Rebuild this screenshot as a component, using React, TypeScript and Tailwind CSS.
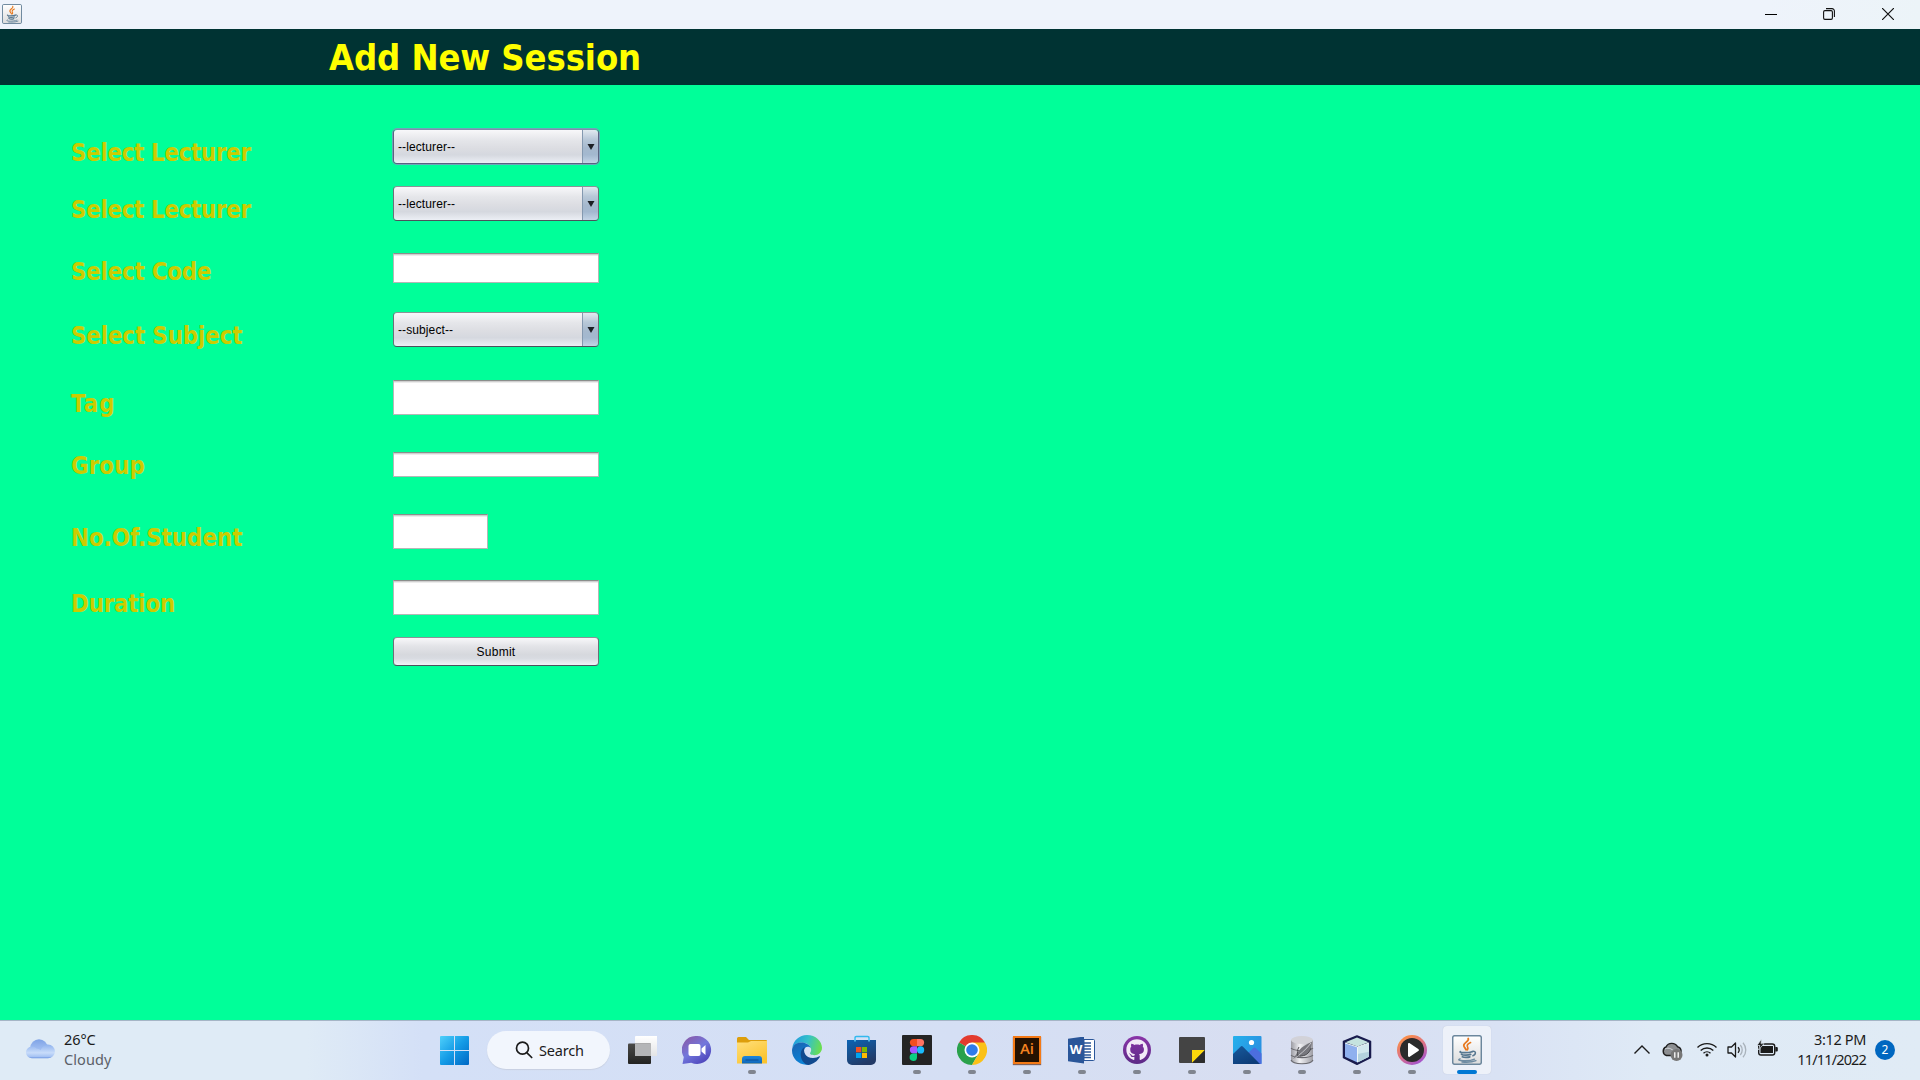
import type { ReactNode } from "react";
import { FaGithub } from "react-icons/fa";

const labelFont = "font-['DejaVu_Sans_Condensed','DejaVu_Sans',sans-serif] [font-stretch:condensed]";

function JavaCup({ className }: { className: string }) {
  return (
    <svg viewBox="0 0 30 30" className={className}>
      <defs>
        <linearGradient id="javaTile" x1="0" y1="0" x2="0" y2="1">
          <stop offset="0" stopColor="#ffffff" />
          <stop offset="1" stopColor="#dcdcdc" />
        </linearGradient>
      </defs>
      <rect x="0.7" y="0.7" width="28.6" height="28.6" rx="2" fill="url(#javaTile)" stroke="#6c879d" strokeWidth="1.5" />
      <g fill="none" strokeLinecap="round">
        <path d="M16.2 3.5c1.5 2.6-4.7 4.3-4.4 7 .1 1.700 1.700 2.700 2.400 4.300" stroke="#e7791f" strokeWidth="1.8" />
        <path d="M18.600 7.500c-2 1-3.900 2.200-3.300 3.800.5 1.200 1.300 2 .2 3.500" stroke="#e7791f" strokeWidth="1.600" />
        <path d="M8.500 16.600c-2.500 1.300 8.500 1.500 11.500.1M9.500 19.300c1 1 7 1 9.200.1M10.300 21.800c1.600.9 5.700.8 7.500.1" stroke="#57778f" strokeWidth="1.700" />
        <path d="M20.300 16.500c4.300-1 3.800 3.200.6 4.200" stroke="#57778f" strokeWidth="1.500" />
        <path d="M8 23.800c-5.500 2 9 3 14.500.4M10 27c4 .4 10 .3 14-1.300" stroke="#6f8ca2" strokeWidth="1.400" />
      </g>
    </svg>
  );
}

function ComboBox({ text, focused = false }: { text: string; focused?: boolean }) {
  return (
    <div
      className={
        "flex h-[35px] w-[206px] shrink-0 overflow-hidden rounded-[4px] border " +
        (focused
          ? "border-[#5b6280] border-t-[#7d8cab] shadow-[0_0_0_1px_#6fa5b9]"
          : "border-[#6b7078] border-t-[#8d9298] border-b-[#4c525c]")
      }
    >
      <div className="flex flex-1 items-center bg-[linear-gradient(to_bottom,#f8f8fa_0%,#e5e6ea_30%,#dcdde2_55%,#d5d8df_75%,#eceff5_100%)] pl-1 font-['Liberation_Sans',Arial,sans-serif] text-[12px] tracking-[0.1px] text-black">
        {text}
      </div>
      <div className="flex w-[16px] items-center justify-center border-l border-[#8499b0] bg-[linear-gradient(to_bottom,#e2e9f0_0%,#b8c8d8_28%,#a5b8cd_55%,#a3b8cf_75%,#c3d4e6_100%)]">
        <svg viewBox="0 0 8 6" className="h-1.5 w-2">
          <path d="M0.500 0h7L4 6z" fill="#1c1f24" />
        </svg>
      </div>
    </div>
  );
}

function TextField({ className }: { className: string }) {
  return (
    <div
      className={
        "shrink-0 border border-[#b4b8b6] border-t-[#8a8e8c] bg-white shadow-[inset_0_1px_0_#cfcfcf,inset_0_2px_0_#ececec] " + className
      }
    />
  );
}

function Row({ label, tracking, className, children }: { label: string; tracking: string; className: string; children: ReactNode }) {
  return (
    <div className={"flex items-end " + className}>
      <label className={labelFont + " w-[322px] shrink-0 translate-y-[4px] text-[24px] leading-[30px] font-bold whitespace-nowrap text-[#cccc00] " + tracking}>
        {label}
      </label>
      {children}
    </div>
  );
}

function TaskIcon({ children, running = false, active = false }: { children: ReactNode; running?: boolean; active?: boolean }) {
  return (
    <div className="flex h-[59px] w-[55px] shrink-0 items-center pb-px pl-[3px]">
      <div className={"flex h-12 w-12 flex-col items-center rounded-[4px] pt-[9px] " + (active ? "bg-[#edf1f9] shadow-[0_0_1px_#b9bfd0]" : "")}>
        {children}
        {running && <div className={"mt-[5px] h-1 shrink-0 rounded-full " + (active ? "w-5 bg-[#0078d4]" : "w-2 bg-[#80858f]")} />}
      </div>
    </div>
  );
}

const ic = "h-[30px] w-[30px] shrink-0";

function Taskbar() {
  return (
    <footer className="flex h-[60px] shrink-0 border-t border-[#a5b5c6] bg-[linear-gradient(to_right,#dfebf6_0%,#dfebf6_16%,#d4e0f7_22%,#d5dff4_50%,#d8def1_66%,#d9e2f4_78%,#dfeaf6_86%,#e0ebf5_100%)] font-['Noto_Sans',sans-serif] text-[14.5px] text-[#1b1b1b]">
      <div className="flex w-[427px] shrink-0 pl-[25px]">
        <svg viewBox="0 0 30 20" className="mt-[18px] h-5 w-[30px]">
          <defs>
            <linearGradient id="cloudBack" x1="0" y1="0" x2="0" y2="1">
              <stop offset="0" stopColor="#7fa3e6" />
              <stop offset="1" stopColor="#b9d2fa" />
            </linearGradient>
            <linearGradient id="cloudFront" x1="0" y1="0" x2="0" y2="1">
              <stop offset="0" stopColor="#8fb2ee" />
              <stop offset="0.6" stopColor="#c8dcfa" />
              <stop offset="0.88" stopColor="#a5c2f3" />
              <stop offset="1" stopColor="#6590df" />
            </linearGradient>
          </defs>
          <circle cx="14" cy="9" r="8.700" fill="url(#cloudBack)" />
          <path d="M7 19.300a6 5.900 0 1 1 4.500-9.800c1 0 3 .7 4.200 1.800C17 8 19.500 5.500 23 5.500a6.900 6.900 0 0 1 0 13.800z" fill="url(#cloudFront)" />
        </svg>
        <div className="ml-[9px] pt-[8px] leading-5">
          <div className="tracking-[-0.1px]">26°C</div>
          <div className="tracking-[0.1px] text-[#5b6068]">Cloudy</div>
        </div>
      </div>

      <div className="flex w-[54px] items-center justify-center">
        <svg viewBox="0 0 29 29" className="mb-px h-[29px] w-[29px]">
          <defs>
            <linearGradient id="winLogo" x1="0" y1="0" x2="1" y2="1" gradientUnits="objectBoundingBox">
              <stop offset="0" stopColor="#4fd0fb" />
              <stop offset="0.5" stopColor="#149be6" />
              <stop offset="1" stopColor="#0067c4" />
            </linearGradient>
          </defs>
          <path d="M1 0h13v14H0V1a1 1 0 0 1 1-1zM15 0h13a1 1 0 0 1 1 1v13H15zM0 15h14v14H1a1 1 0 0 1-1-1zM15 15h14v13a1 1 0 0 1-1 1H15z" fill="url(#winLogo)" />
        </svg>
      </div>
      <div className="mt-[10px] ml-[6px] flex h-[38px] w-[123px] items-center rounded-full bg-[#f2f6fd] pl-7 shadow-[0_1px_1px_#c8d0e2]">
        <svg viewBox="0 0 18 18" className="h-[18px] w-[18px]" fill="none" stroke="#1b1b1b" strokeWidth="1.700" strokeLinecap="round">
          <circle cx="7.500" cy="7.200" r="6" />
          <path d="M12 11.800l4.700 4.700" />
        </svg>
        <span className="ml-[6px] pt-px tracking-[-0.2px]">Search</span>
      </div>

      <div className="ml-[5px] flex">
        <TaskIcon>
          <svg viewBox="0 0 30 30" className={ic}>
            <defs>
              <linearGradient id="tvDark" x1="0" y1="0" x2="0" y2="1"><stop offset="0" stopColor="#4a4a48" /><stop offset="1" stopColor="#232322" /></linearGradient>
              <linearGradient id="tvLight" x1="0" y1="0" x2="0" y2="1"><stop offset="0" stopColor="#ffffff" /><stop offset="1" stopColor="#e3e4e6" /></linearGradient>
            </defs>
            <rect x="8" y="1" width="22.500" height="20" rx="1" fill="url(#tvLight)" />
            <rect x="1" y="8.500" width="23" height="20.500" rx="1" fill="url(#tvDark)" />
            <path d="M8 8.500h16V21H8z" fill="#b4b5b7" />
          </svg>
        </TaskIcon>
        <TaskIcon>
          <svg viewBox="0 0 30 30" className={ic}>
            <defs>
              <linearGradient id="chat" x1="0.100" y1="0" x2="0.800" y2="1"><stop offset="0" stopColor="#8b58a5" /><stop offset="0.500" stopColor="#7277dc" /><stop offset="1" stopColor="#4a41b8" /></linearGradient>
            </defs>
            <path d="M15.200 1a14 14 0 1 1-6 26.700L.5 29l1.300-7A14 14 0 0 1 15.200 1z" fill="url(#chat)" />
            <rect x="6.500" y="9" width="12" height="12" rx="2" fill="#fff" />
            <path d="M19.500 13.500l4-3.500v10l-4-3.500z" fill="#fff" />
          </svg>
        </TaskIcon>
        <TaskIcon running>
          <svg viewBox="0 0 30 30" className={ic}>
            <defs>
              <linearGradient id="folder" x1="0" y1="0" x2="0.600" y2="1"><stop offset="0" stopColor="#ffdf7c" /><stop offset="1" stopColor="#fbc42f" /></linearGradient>
              <linearGradient id="folderTab" x1="0" y1="0" x2="0" y2="1"><stop offset="0" stopColor="#1c86dc" /><stop offset="1" stopColor="#0f66b8" /></linearGradient>
            </defs>
            <path d="M0 3.500A1.500 1.500 0 0 1 1.500 2H9l3 3h17a1 1 0 0 1 1 1v5H0z" fill="#dd9e0b" />
            <path d="M0 7.500h11L14 6h16v22.500H0z" fill="url(#folder)" />
            <path d="M5 28.500V24a3 3 0 0 1 3-3h14a3 3 0 0 1 3 3v4.500z" fill="url(#folderTab)" />
            <path d="M8.500 25h13" stroke="#0a4c94" strokeWidth="1" />
          </svg>
        </TaskIcon>
        <TaskIcon>
          <svg viewBox="0 0 30 30" className={ic}>
            <defs>
              <linearGradient id="edgeTop" x1="0" y1="0.300" x2="1" y2="0.500"><stop offset="0" stopColor="#1f9ade" /><stop offset="0.500" stopColor="#35c1c9" /><stop offset="1" stopColor="#6bde4e" /></linearGradient>
              <linearGradient id="edgeLeft" x1="0" y1="0" x2="0.500" y2="1"><stop offset="0" stopColor="#1b62b0" /><stop offset="1" stopColor="#0b84d8" /></linearGradient>
            </defs>
            <path d="M.3 13C1.300 5.500 7.300 0 15 0c8.800 0 15 6.300 15 12.800 0 4.600-3.600 7.400-7.600 7.400-3.200 0-4.900-1.200-4.200-2.400.7-1.100 1.200-2 .8-4C18.200 10.500 15 7.500 9.500 7.500 5 7.500 1.600 10 .3 13z" fill="url(#edgeTop)" />
            <path d="M.1 14.200C.8 10.200 4.600 7.500 9.200 7.500c5 0 8.800 2.500 9.600 5.500-2.300-2.300-6.500-1.700-6.800 2.500-.4 5.500 2.500 10.500 8 12.300-2 1.600-4.500 2.200-6.200 2C5.800 29.100-.8 22.500.1 14.200z" fill="url(#edgeLeft)" />
            <path d="M8.700 19.200c0-3.200 1.500-6 4-7.300-2 4.500.5 11 8.300 11 2.700 0 4.900-.9 6.600-1.700.4-.2.700.1.400.5-2.500 4.300-7 7.800-11.800 8.200-4.500-.6-7.500-5.700-7.500-10.700z" fill="#114a8f" />
          </svg>
        </TaskIcon>
        <TaskIcon>
          <svg viewBox="0 0 30 30" className={ic}>
            <defs>
              <linearGradient id="store" x1="0" y1="0" x2="0.500" y2="1"><stop offset="0" stopColor="#0b64b5" /><stop offset="1" stopColor="#233a66" /></linearGradient>
            </defs>
            <path d="M8 7V2.800A1.300 1.300 0 0 1 9.300 1.500h11.400A1.300 1.300 0 0 1 22 2.800V7" fill="none" stroke="#33b9ee" strokeWidth="1.500" />
            <path d="M0 5h29v20a5 5 0 0 1-5 5H5a5 5 0 0 1-5-5z" fill="url(#store)" />
            <path d="M8 6.500V3M22 6.500V3" stroke="#5fcdf8" strokeWidth="1.500" />
            <path d="M9 12h5.300v5.300H9z" fill="#f25022" /><path d="M15 12h5v5.300h-5z" fill="#7fba00" />
            <path d="M9 18h5.300v5H9z" fill="#00a4ef" /><path d="M15 18h5v5h-5z" fill="#ffb900" />
          </svg>
        </TaskIcon>
        <TaskIcon running>
          <svg viewBox="0 0 30 30" className={ic}>
            <rect width="30" height="30" rx="1" fill="#242424" />
            <path d="M15 4h-3.500a3.600 3.600 0 0 0 0 7.200H15z" fill="#f24e1e" />
            <path d="M15 4h3.500a3.600 3.600 0 0 1 0 7.200H15z" fill="#ff7262" />
            <path d="M15 11.200h-3.500a3.600 3.600 0 0 0 0 7.300H15z" fill="#a259ff" />
            <circle cx="18.600" cy="14.900" r="3.600" fill="#1abcfe" />
            <path d="M15 18.500h-3.500a3.700 3.700 0 1 0 3.500 3.900z" fill="#0acf83" />
          </svg>
        </TaskIcon>
        <TaskIcon running>
          <svg viewBox="0 0 30 30" className={ic}>
            <path d="M15 15L2 7.500A15 15 0 0 1 28 7.500z" fill="#e33b2e" />
            <path d="M2 7.500A15 15 0 0 0 15 30l6.500-11.250L15 15z" fill="#2aa14b" />
            <path d="M15 7.500h13A15 15 0 0 1 15 30l6.500-11.250z" fill="#fbc117" />
            <circle cx="15" cy="15" r="7.500" fill="#fff" />
            <circle cx="15" cy="15" r="5.800" fill="#2f7bea" />
          </svg>
        </TaskIcon>
        <TaskIcon running>
          <div className="flex h-[30px] w-[30px] shrink-0 items-center justify-center">
            <div className="mb-px flex h-[28px] w-[28px] items-center justify-center border-2 border-[#f47a16] bg-[#251100] pb-[2px] font-['Open_Sans',sans-serif] text-[15px] leading-none font-semibold text-[#f58220] shadow-[0_1px_1px_#80625c]">
              Ai
            </div>
          </div>
        </TaskIcon>
        <TaskIcon running>
          <div className="flex h-[30px] w-[30px] shrink-0 items-center">
            <div className="ml-px flex h-[27px] w-[16px] items-center justify-center bg-[#2a5699] font-['Open_Sans',sans-serif] text-[13px] font-bold text-white [clip-path:polygon(0_8%,100%_0,100%_100%,0_92%)]">
              W
            </div>
            <svg viewBox="0 0 11 22" className="h-[22px] w-[11px]">
              <path d="M0 .5h9.500a1 1 0 0 1 1 1v19a1 1 0 0 1-1 1H0z" fill="#fff" stroke="#2a5699" />
              <path d="M0 4h7M0 7h7M0 10h7M0 13h7M0 16h7M0 18.500h7" stroke="#2a5699" strokeWidth="1.300" />
            </svg>
          </div>
        </TaskIcon>
        <TaskIcon running>
          <div className="flex h-[30px] w-[30px] shrink-0 items-center justify-center">
            <div className="flex h-7 w-7 items-center justify-center rounded-full bg-[linear-gradient(to_bottom,#8a35a8,#5c2a86)]">
              <FaGithub className="h-[22px] w-[22px] text-[#f2eaf7]" />
            </div>
          </div>
        </TaskIcon>
        <TaskIcon running>
          <svg viewBox="0 0 30 30" className={ic}>
            <rect x="2" y="2" width="26" height="26" rx="1" fill="#444444" />
            <path d="M15 15h13L15 28z" fill="#fcd80c" />
            <path d="M28 15v12a1 1 0 0 1-1 1H15z" fill="#2c2c2c" />
          </svg>
        </TaskIcon>
        <TaskIcon running>
          <svg viewBox="0 0 30 30" className={ic}>
            <defs>
              <linearGradient id="sky" x1="0" y1="0" x2="1" y2="0.600"><stop offset="0" stopColor="#25b1ec" /><stop offset="1" stopColor="#2a8ee0" /></linearGradient>
              <linearGradient id="hill" x1="0" y1="0" x2="0.600" y2="1"><stop offset="0" stopColor="#175a9c" /><stop offset="1" stopColor="#0d3c78" /></linearGradient>
            </defs>
            <rect x="1" y="1" width="28.500" height="28" rx="1" fill="url(#sky)" />
            <path d="M16 18l5.500-5a1.500 1.500 0 0 1 2 0l6 5.500V29H22z" fill="#4c6ede" />
            <path d="M1 19l7.500-7.300a1.800 1.800 0 0 1 2.500 0L28 29H1z" fill="url(#hill)" />
            <circle cx="19.500" cy="7.500" r="2.600" fill="#fff" />
          </svg>
        </TaskIcon>
        <TaskIcon running>
          <svg viewBox="0 0 30 30" className={ic}>
            <defs>
              <linearGradient id="drum" x1="0" y1="0" x2="1" y2="0"><stop offset="0" stopColor="#9b9ba2" /><stop offset="0.400" stopColor="#f1f1f4" /><stop offset="1" stopColor="#9d9da4" /></linearGradient>
            </defs>
            <path d="M4 5v19.500c0 6 22 6 22 0V5z" fill="url(#drum)" />
            <ellipse cx="15" cy="5" rx="11" ry="4" fill="#d2d2d8" />
            <path d="M4 13c3 3.500 19 3.500 22 0M4 20c3 3.500 19 3.500 22 0M4 25c2 5 20 5 22 0" fill="none" stroke="#68686e" strokeWidth="1.100" />
            <path d="M6 25c3-6 7-14 19-18-1 7-2 12-9 14-4 1-7 1-10 4z" fill="#77777d" />
            <path d="M6 25C12 20 19 15 24 8" fill="none" stroke="#c9c9ce" strokeWidth="1" />
            <path d="M12 12c-2 3-2 6-1 9M13 21c5 0 9-2 11-8" fill="none" stroke="#4c4c50" strokeWidth="1" />
          </svg>
        </TaskIcon>
        <TaskIcon running>
          <svg viewBox="0 0 30 30" className={ic}>
            <path d="M15 1l13.500 5.500v16L15 29.300 1.500 22.500v-16z" fill="#191b4d" stroke="#191b4d" strokeWidth="1.500" strokeLinejoin="round" />
            <path d="M15 2.500l11.500 4.800L15.500 11.500 3.500 7.300z" fill="#c5e3df" />
            <path d="M3 8l12.500 4v15.500L3 21.700z" fill="#8fb0ee" />
            <path d="M27 8l-11.500 4v15.500L27 21.700z" fill="#d2e8ee" />
            <path d="M15.500 19v8.500L27 21.700v-5z" fill="#b4d2de" />
            <path d="M3 8l12.500 4L27 8M15.500 12v15" fill="none" stroke="#eef7f8" strokeWidth="1" />
          </svg>
        </TaskIcon>
        <TaskIcon running>
          <svg viewBox="0 0 30 30" className={ic}>
            <defs>
              <linearGradient id="ring" x1="0.200" y1="0" x2="0.800" y2="1"><stop offset="0" stopColor="#ff9440" /><stop offset="0.500" stopColor="#dc7185" /><stop offset="1" stopColor="#9c50d8" /></linearGradient>
            </defs>
            <circle cx="15" cy="15" r="15" fill="url(#ring)" />
            <circle cx="15" cy="15" r="12" fill="#2b2b2b" />
            <path d="M11 9.200c0-1 .8-1.500 1.700-1l8.600 5.700c.8.600.8 1.600 0 2.200l-8.600 5.700c-.9.500-1.700 0-1.700-1z" fill="#fff" />
          </svg>
        </TaskIcon>
        <TaskIcon running active>
          <JavaCup className={ic} />
        </TaskIcon>
      </div>

      <div className="ml-auto flex items-center pr-[25px] pb-px">
        <svg viewBox="0 0 16 9" className="mb-px h-[9px] w-4" fill="none" stroke="#1b1b1b" strokeWidth="1.400">
          <path d="M.5 8.500L8 1l7.500 7.500" />
        </svg>
        <svg viewBox="0 0 22 20" className="mt-[4px] ml-[11px] h-5 w-[22px]">
          <path d="M5.500 13.500a4.500 4.500 0 0 1-.5-8.500 6.500 6.500 0 0 1 11.500-.3A4.500 4.500 0 0 1 16.500 13.500z" fill="#8c8e91" stroke="#1d1d1d" strokeWidth="1.400" />
          <path d="M4 7c4-2 7-.5 13 6" fill="none" stroke="#d5dade" strokeWidth="1" />
          <circle cx="15.500" cy="13" r="6" fill="#777777" />
          <path d="M13.800 10.300v5.500M17.200 10.300v5.500" stroke="#fff" strokeWidth="1.300" />
        </svg>
        <svg viewBox="0 0 20 15" className="mb-px ml-[14px] h-[15px] w-5" fill="none" stroke="#1b1b1b" strokeWidth="1.400">
          <path d="M.5 5.500a13.500 13.500 0 0 1 19 0M3.700 8.500a9 9 0 0 1 12.600 0M6.500 11.300a5 5 0 0 1 7 0" />
          <circle cx="10" cy="13" r="1.500" fill="#1b1b1b" stroke="none" />
        </svg>
        <svg viewBox="0 0 21 18" className="ml-[10px] h-[18px] w-[21px]" fill="none" stroke="#1b1b1b" strokeWidth="1.300">
          <path d="M1 6h3.500L8.500 2v14l-4-4H1z" strokeLinejoin="round" />
          <path d="M11 6.300a4 4 0 0 1 0 5.400" />
          <path d="M13.300 4a7.500 7.500 0 0 1 0 10M16 1.700a11 11 0 0 1 0 14.600" stroke="#a9b2bb" />
        </svg>
        <svg viewBox="0 0 21 17" className="mb-[5px] ml-[9px] h-[17px] w-[21px]">
          <rect x="1.700" y="5" width="16" height="11" rx="2.300" fill="none" stroke="#1b1b1b" strokeWidth="1.400" />
          <path d="M3.500 7h12.500v7H3.500zM18.300 8h1.500a1 1 0 0 1 1 1v2.500a1 1 0 0 1-1 1h-1.500z" fill="#1b1b1b" />
          <path d="M4.500 0L0 6.500h3L1.500 11 7 4.700H4z" fill="#1b1b1b" stroke="#e0ebf5" strokeWidth="0.700" />
        </svg>
        <div className="mb-[2px] ml-[20px] flex w-[68px] flex-col items-end leading-5 whitespace-nowrap">
          <div className="tracking-[-0.350px]">3:12 PM</div>
          <div className="tracking-[-0.850px]">11/11/2022</div>
        </div>
        <div className="ml-[9px] flex h-5 w-5 items-center justify-center rounded-full bg-[#0067c0] text-[12px] text-white">2</div>
      </div>
    </footer>
  );
}

export default function App() {
  return (
    <div className="flex h-[1080px] w-[1920px] flex-col overflow-hidden bg-[#00ff99]">
      <header className="flex h-[29px] shrink-0 items-center justify-between bg-[linear-gradient(to_right,#eef3fb_0%,#eef3fb_92%,#ecf4f8_100%)] pr-[26px] pl-[2px]">
        <JavaCup className="mb-[2px] h-5 w-5" />
        <div className="flex items-center">
          <svg viewBox="0 0 12 12" className="mb-px h-3 w-3"><path d="M0 6h12" stroke="#000" strokeWidth="1" shapeRendering="crispEdges" /></svg>
          <svg viewBox="0 0 12 12" className="mb-px ml-[46px] h-3 w-3" fill="none" stroke="#111" strokeWidth="1.100">
            <rect x="0.600" y="2.600" width="8.800" height="8.800" rx="1.300" />
            <path d="M3 .6h6a2.400 2.400 0 0 1 2.400 2.400v6" />
          </svg>
          <svg viewBox="0 0 12 12" className="mb-px ml-[47px] h-3 w-3" stroke="#111" strokeWidth="1.200"><path d="M0 0l12 12M12 0L0 12" /></svg>
        </div>
      </header>
      <div className="flex h-14 shrink-0 items-center bg-[#003333] pt-[2px] pl-[329px]">
        <h1 className={labelFont + " text-[36px] leading-[44px] font-bold tracking-[-0.08px] whitespace-nowrap text-[#ffff00]"}>Add New Session</h1>
      </div>

      <main className="flex flex-1 flex-col pl-[71px]">
        <Row label="Select Lecturer" tracking="tracking-[-0.4px]" className="mt-[44px] h-[35px]"><ComboBox text="--lecturer--" focused /></Row>
        <Row label="Select Lecturer" tracking="tracking-[-0.4px]" className="mt-[22px] h-[35px]"><ComboBox text="--lecturer--" /></Row>
        <Row label="Select Code" tracking="tracking-[-0.3px]" className="mt-8 h-[30px]"><TextField className="h-[30px] w-[206px]" /></Row>
        <Row label="Select Subject" tracking="tracking-[-0.22px]" className="mt-[29px] h-[35px]"><ComboBox text="--subject--" /></Row>
        <Row label="Tag" tracking="tracking-[1px]" className="mt-[33px] h-[35px]"><TextField className="h-[35px] w-[206px]" /></Row>
        <Row label="Group" tracking="tracking-normal" className="mt-[37px] h-[25px]"><TextField className="h-[25px] w-[206px]" /></Row>
        <Row label="No.Of.Student" tracking="tracking-[-0.1px]" className="mt-[37px] h-[35px]"><TextField className="h-[35px] w-[95px]" /></Row>
        <Row label="Duration" tracking="tracking-[-0.3px]" className="mt-[31px] h-[35px]"><TextField className="h-[35px] w-[206px]" /></Row>
        <button className="mt-[22px] ml-[322px] h-[29px] w-[206px] rounded-[4px] border border-[#6b7078] border-t-[#8d9298] border-b-[#4c525c] bg-[linear-gradient(to_bottom,#f8f8fa_0%,#e3e4e8_30%,#d6d8dd_62%,#d8dbe1_75%,#f0f2f7_100%)] font-['Liberation_Sans',Arial,sans-serif] text-[12px] tracking-[0.25px] text-black">
          Submit
        </button>
      </main>
      <Taskbar />
    </div>
  );
}
